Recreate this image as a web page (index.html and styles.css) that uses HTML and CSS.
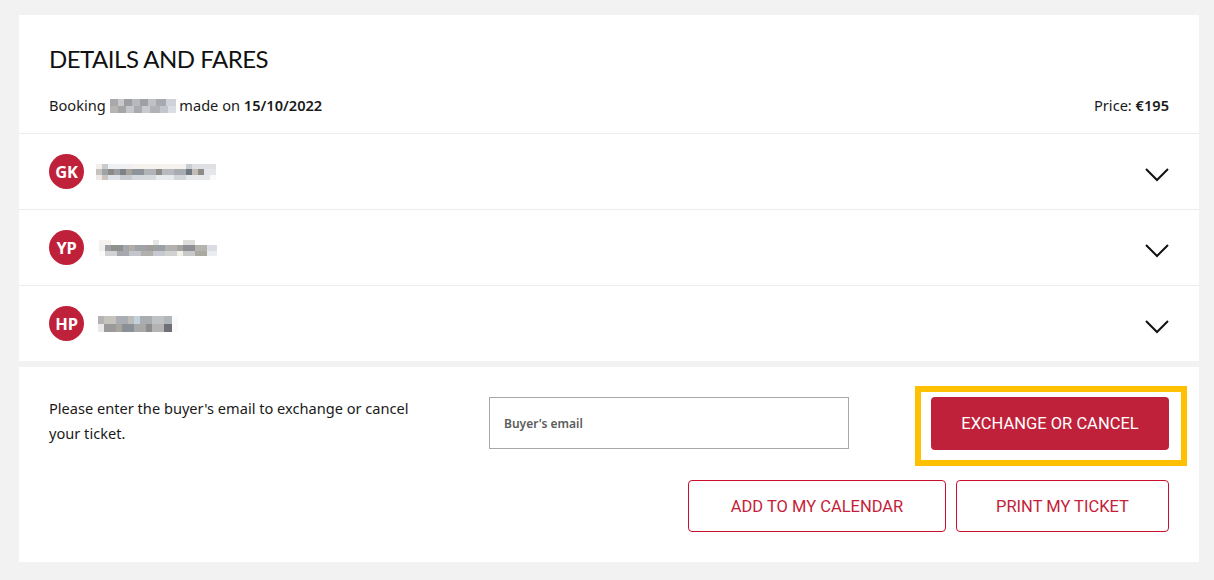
FILE: index.html
```html
<!DOCTYPE html>
<html lang="en">
<head>
<meta charset="utf-8">
<title>Details and fares</title>
<link rel="stylesheet" href="styles.css">
</head>
<body>
<main class="page">
  <section class="card details">
    <header class="details-head">
      <h1 class="title">DETAILS AND FARES</h1>
      <div class="meta">
        <p class="booking">Booking <span class="redact redact-code"></span> made on <strong>15/10/2022</strong></p>
        <p class="price">Price: <strong>€195</strong></p>
      </div>
    </header>
    <ul class="passengers">
      <li class="passenger">
        <span class="avatar">GK</span>
        <span class="redact redact-name1"></span>
        <svg class="chevron" viewBox="0 0 24 14" width="24" height="14" aria-hidden="true"><polyline points="1,1 12,12 23,1" fill="none" stroke="#111" stroke-width="2"/></svg>
      </li>
      <li class="passenger">
        <span class="avatar">YP</span>
        <span class="redact redact-name2"></span>
        <svg class="chevron" viewBox="0 0 24 14" width="24" height="14" aria-hidden="true"><polyline points="1,1 12,12 23,1" fill="none" stroke="#111" stroke-width="2"/></svg>
      </li>
      <li class="passenger">
        <span class="avatar">HP</span>
        <span class="redact redact-name3"></span>
        <svg class="chevron" viewBox="0 0 24 14" width="24" height="14" aria-hidden="true"><polyline points="1,1 12,12 23,1" fill="none" stroke="#111" stroke-width="2"/></svg>
      </li>
    </ul>
  </section>

  <section class="card actions">
    <div class="action-row">
      <p class="hint">Please enter the buyer's email to exchange or cancel your ticket.</p>
      <input class="email" type="email" placeholder="Buyer's email">
      <div class="highlight">
        <button class="btn btn-primary" type="button">EXCHANGE OR CANCEL</button>
      </div>
    </div>
    <div class="button-row">
      <button class="btn btn-outline btn-calendar" type="button">ADD TO MY CALENDAR</button>
      <button class="btn btn-outline btn-print" type="button">PRINT MY TICKET</button>
    </div>
  </section>
</main>
</body>
</html>
```

FILE: styles.css
```css
* { box-sizing: border-box; }

html, body {
  margin: 0;
  background: #f2f2f2;
}

body {
  font-family: "Noto Sans", "Open Sans", "Liberation Sans", sans-serif;
  color: #1a1a1a;
}

.page {
  margin: 15px 15px 0 19px;
  display: flex;
  flex-direction: column;
  gap: 6px;
}

.card {
  background: #fff;
}

/* ---------- details ---------- */
.details-head {
  padding: 29px 30px 17px;
  border-bottom: 1px solid #ececec;
}

.title {
  margin: 0 0 20px;
  font-family: "Lato", "Liberation Sans", sans-serif;
  font-weight: 400;
  font-size: 24px;
  letter-spacing: -0.5px;
  line-height: 30px;
  color: #111;
}

.meta {
  display: flex;
  justify-content: space-between;
  align-items: center;
  font-size: 14.6px;
  line-height: 22px;
}

.meta p { margin: 0; }

.meta strong { font-weight: 600; }

.redact {
  display: inline-block;
  vertical-align: middle;
  filter: blur(0.4px);
}

.redact-code {
  width: 66px;
  height: 14px;
  margin: -3px 0 0;
  background:
    linear-gradient(90deg, #a9a9ab 0 8px, #c9c9cc 8px 14px, #9d9ea2 14px 22px, #b8b9bd 22px 30px, #9fa0a5 30px 38px, #bfc1c6 38px 46px, #a8a9ae 46px 56px, #cfd2d8 56px 66px) top / 100% 7px no-repeat,
    linear-gradient(90deg, #b7b4b1 0 8px, #a4a6a8 8px 16px, #c4c6ca 16px 24px, #a9abb0 24px 32px, #c7c9cd 32px 40px, #b1b2b7 40px 50px, #c3c5ca 50px 58px, #dadde2 58px 66px) bottom / 100% 7px no-repeat;
}

/* ---------- passengers ---------- */
.passengers {
  list-style: none;
  margin: 0;
  padding: 0;
}

.passenger {
  height: 76px;
  padding: 0 30px;
  display: flex;
  align-items: center;
  border-bottom: 1px solid #ececec;
}

.passenger:last-child { border-bottom: 0; height: 75px; }

.avatar {
  flex: none;
  width: 35px;
  height: 35px;
  border-radius: 50%;
  background: #c0213a;
  color: #fff;
  font-family: "Noto Sans", "Liberation Sans", sans-serif;
  font-weight: 700;
  font-size: 16.5px;
  display: flex;
  align-items: center;
  justify-content: center;
  letter-spacing: -0.3px;
}

.redact-name1, .redact-name2, .redact-name3 {
  height: 16px;
  margin-left: 12px;
}

.redact-name1 {
  width: 120px;
  background:
    linear-gradient(90deg, #f2efea 0 6px, #c8cacd 6px 12px, #eef0f2 12px 36px, #f5f2ee 36px 90px, #c9ccd0 90px 96px, #dfe0e3 96px 120px) top / 100% 5px no-repeat,
    linear-gradient(90deg, #c7c2bd 0 6px, #9ea3a8 6px 12px, #8c8a87 12px 18px, #9a9ea3 18px 24px, #7e8187 24px 30px, #a6a29e 30px 36px, #8f949a 36px 48px, #b0b4b9 48px 60px, #8e8c88 60px 66px, #b6b9bd 66px 78px, #a8abb0 78px 90px, #6f7680 90px 96px, #c0bcb6 96px 102px, #8f8c88 102px 108px, #e4e6e9 108px 120px) center / 100% 6px no-repeat,
    linear-gradient(90deg, #ece9e6 0 6px, #c9c4bf 6px 12px, #dde2e8 12px 24px, #c7cbd0 24px 36px, #d6d9dd 36px 60px, #e8eaec 60px 78px, #d2d5da 78px 90px, #e6e8ea 90px 114px, #fafafa 114px 120px) bottom / 100% 5px no-repeat;
}

.redact-name2 {
  width: 118px;
  margin-left: 15px;
  background:
    linear-gradient(90deg, #f4f1ee 0 12px, #ffffff 12px 54px, #e6e6e6 54px 60px, #ffffff 60px 84px, #e0dedc 84px 96px, #ffffff 96px 118px) top / 100% 5px no-repeat,
    linear-gradient(90deg, #f1efec 0 6px, #9b9fa4 6px 12px, #8f918f 12px 24px, #a4a8ad 24px 30px, #b0ada6 30px 36px, #9fa2a7 36px 48px, #a29c97 48px 54px, #9ca1a6 54px 66px, #b4b2b0 66px 78px, #a5a3a0 78px 84px, #8e9095 84px 96px, #b4b3ae 96px 108px, #d9dde3 108px 118px) center / 100% 6px no-repeat,
    linear-gradient(90deg, #fafafa 0 6px, #d2d2d4 6px 18px, #a6a8ad 18px 30px, #c2c5ca 30px 42px, #b2b0ac 42px 54px, #c6c9cf 54px 66px, #d1d1d1 66px 78px, #f2efe8 78px 84px, #c8c8c8 84px 96px, #aca9a1 96px 108px, #e9ecf0 108px 118px) bottom / 100% 5px no-repeat;
}

.redact-name3 {
  width: 80px;
  margin-left: 14px;
  background:
    linear-gradient(90deg, #b3b3b3 0 6px, #c6c3bf 6px 18px, #aaaeb3 18px 30px, #bcbcb9 30px 36px, #c3d1dc 36px 42px, #a9acb1 42px 54px, #bfc1c4 54px 66px, #b1b6bb 66px 74px, #fafafa 74px 80px) top / 100% 8px no-repeat,
    linear-gradient(90deg, #e9e9e9 0 6px, #9a9a9a 6px 18px, #a8a59c 18px 24px, #8b9096 24px 36px, #a8a8a8 36px 48px, #8d8d8d 48px 54px, #b3b3b3 54px 66px, #6f7075 66px 74px, #fafafa 74px 80px) bottom / 100% 8px no-repeat;
}

.chevron {
  margin-left: auto;
  margin-top: 7px;
  width: 24px;
  height: 14px;
}

/* ---------- actions ---------- */
.actions {
  padding: 30px 30px 30px;
  display: flex;
  flex-direction: column;
  gap: 30px;
}

.action-row {
  display: flex;
  align-items: flex-start;
}

.hint {
  margin: -1px 0 0;
  width: 390px;
  font-size: 14.6px;
  line-height: 25px;
  color: #1a1a1a;
}

.email {
  margin-left: 50px;
  width: 360px;
  height: 52px;
  border: 1px solid #a8a8a8;
  border-radius: 0;
  padding: 0 14px;
  font-family: "Noto Sans", "Liberation Sans", sans-serif;
  font-size: 12px;
  font-weight: 600;
  color: #333;
  background: #fff;
}

.email::placeholder {
  color: #5c5c5c;
  opacity: 1;
}

.highlight {
  margin-left: auto;
  position: relative;
}

.highlight::after {
  content: "";
  position: absolute;
  top: -11px;
  left: -16px;
  right: -18px;
  bottom: -16px;
  border: 6px solid #fec000;
  pointer-events: none;
}

.btn {
  font-family: "Roboto", "Liberation Sans", sans-serif;
  font-size: 16.5px;
  font-weight: 400;
  border-radius: 4px;
  cursor: pointer;
  display: flex;
  align-items: center;
  justify-content: center;
}

.btn-primary {
  width: 238px;
  height: 53px;
  background: #c0213a;
  color: #fff;
  border: 0;
}

.button-row {
  display: flex;
  justify-content: flex-end;
  gap: 10px;
}

.btn-outline {
  height: 52px;
  background: #fff;
  color: #c41e3a;
  border: 1px solid #c8102e;
}

.btn-calendar { width: 258px; }
.btn-print { width: 213px; }
```
